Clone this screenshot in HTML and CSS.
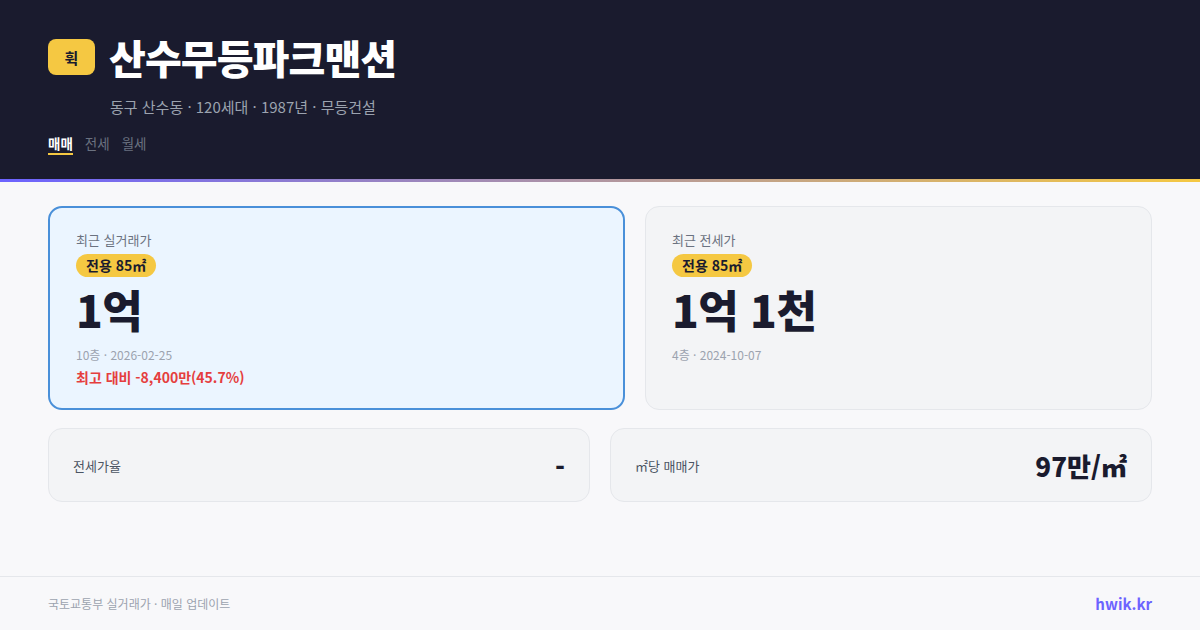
FILE: index.html
```html
<!DOCTYPE html>
<html lang="ko">
<head>
<meta charset="utf-8">
<title>산수무등파크맨션</title>
<link rel="stylesheet" href="styles.css">
</head>
<body>
<div class="page">
  <header class="hero">
    <div class="hero-top">
      <div class="logo">휙</div>
      <h1 class="title">산수무등파크맨션</h1>
    </div>
    <div class="subtitle">동구 산수동 · 120세대 · 1987년 · 무등건설</div>
    <nav class="tabs">
      <span class="tab active">매매</span>
      <span class="tab">전세</span>
      <span class="tab">월세</span>
    </nav>
  </header>
  <div class="accent"></div>
  <main class="content">
    <section class="cards">
      <div class="card card-primary">
        <div class="card-label">최근 실거래가</div>
        <span class="pill">전용 85㎡</span>
        <div class="price">1억</div>
        <div class="meta">10층 · 2026-02-25</div>
        <div class="diff">최고 대비 -8,400만(45.7%)</div>
      </div>
      <div class="card">
        <div class="card-label">최근 전세가</div>
        <span class="pill">전용 85㎡</span>
        <div class="price">1억 1천</div>
        <div class="meta">4층 · 2024-10-07</div>
      </div>
    </section>
    <section class="stats">
      <div class="stat">
        <span class="stat-label">전세가율</span>
        <span class="stat-value">-</span>
      </div>
      <div class="stat">
        <span class="stat-label">㎡당 매매가</span>
        <span class="stat-value">97만/㎡</span>
      </div>
    </section>
  </main>
  <footer class="footer">
    <span class="source">국토교통부 실거래가 · 매일 업데이트</span>
    <span class="brand">hwik.kr</span>
  </footer>
</div>
</body>
</html>
```

FILE: styles.css
```css
* { box-sizing: border-box; margin: 0; padding: 0; }
html, body { width: 1200px; height: 630px; overflow: hidden; }
body {
  font-family: "Noto Sans CJK KR", "Noto Sans", sans-serif;
  background: #f8f8fa;
  color: #1a1b2e;
}
.page { display: flex; flex-direction: column; height: 630px; }

.hero {
  background: #1a1b2e;
  height: 179px;
  padding: 35px 48px 0;
}
.hero-top { display: flex; align-items: center; gap: 14px; height: 44px; }
.logo {
  width: 47px; height: 36px;
  background: #f5c842;
  border-radius: 8px;
  display: flex; align-items: center; justify-content: center;
  font-size: 15px; font-weight: 700; color: #1a1b2e;
}
.title {
  font-size: 40px; font-weight: 900; color: #ffffff;
  line-height: 44px; letter-spacing: -0.9px;
}
.subtitle {
  margin: 19px 0 0 62px;
  font-size: 15px; line-height: 18px;
  color: #9ca3af;
}
.tabs { display: flex; gap: 12px; margin-top: 18px; }
.tab {
  font-size: 13.5px; line-height: 18px; color: #6b7280;
  padding-bottom: 1px; border-bottom: 2px solid transparent;
}
.tab.active { color: #ffffff; font-weight: 700; border-bottom-color: #f5c842; }

.accent { height: 3px; background: linear-gradient(90deg, #6c63ff, #f5c842); }

.content { flex: 1; padding: 24px 48px 0; display: flex; flex-direction: column; gap: 18px; }
.cards { display: grid; grid-template-columns: 577fr 507fr; gap: 20px; }
.card {
  height: 204px;
  background: #f3f4f6;
  border: 1px solid #e5e7eb;
  border-radius: 14px;
  padding: 24px 26px;
  display: flex; flex-direction: column; align-items: flex-start;
}
.card-primary { background: #ebf5ff; border: 2px solid #4a90d9; padding: 23px 26px; }
.card-label { font-size: 13px; line-height: 18px; color: #6b7280; }
.pill {
  margin-top: 5px;
  background: #f5c842; border-radius: 12px;
  padding: 0 10px; height: 23px;
  font-size: 14px; font-weight: 700; line-height: 23px; color: #1a1b2e;
}
.price { margin-top: 6px; font-size: 44px; font-weight: 900; line-height: 52px; letter-spacing: -0.5px; color: #1a1b2e; }
.meta { margin-top: 11px; font-size: 12px; line-height: 18px; color: #9ca3af; }
.diff { margin-top: 3px; font-size: 14px; font-weight: 700; line-height: 20px; color: #e53e3e; }

.stats { display: grid; grid-template-columns: 1fr 1fr; gap: 20px; }
.stat {
  height: 74px;
  background: #f3f4f6;
  border: 1px solid #e5e7eb;
  border-radius: 14px;
  padding: 0 24px;
  display: flex; align-items: center; justify-content: space-between;
}
.stat-label { font-size: 13px; color: #4b5563; }
.stat-value { font-size: 26px; font-weight: 800; color: #1a1b2e; }

.footer {
  height: 54px;
  border-top: 1px solid #e5e7eb;
  padding: 0 48px;
  display: flex; align-items: center; justify-content: space-between;
}
.source { font-size: 12px; color: #9ca3af; }
.brand { font-size: 15px; font-weight: 700; color: #6c63ff; }
```
